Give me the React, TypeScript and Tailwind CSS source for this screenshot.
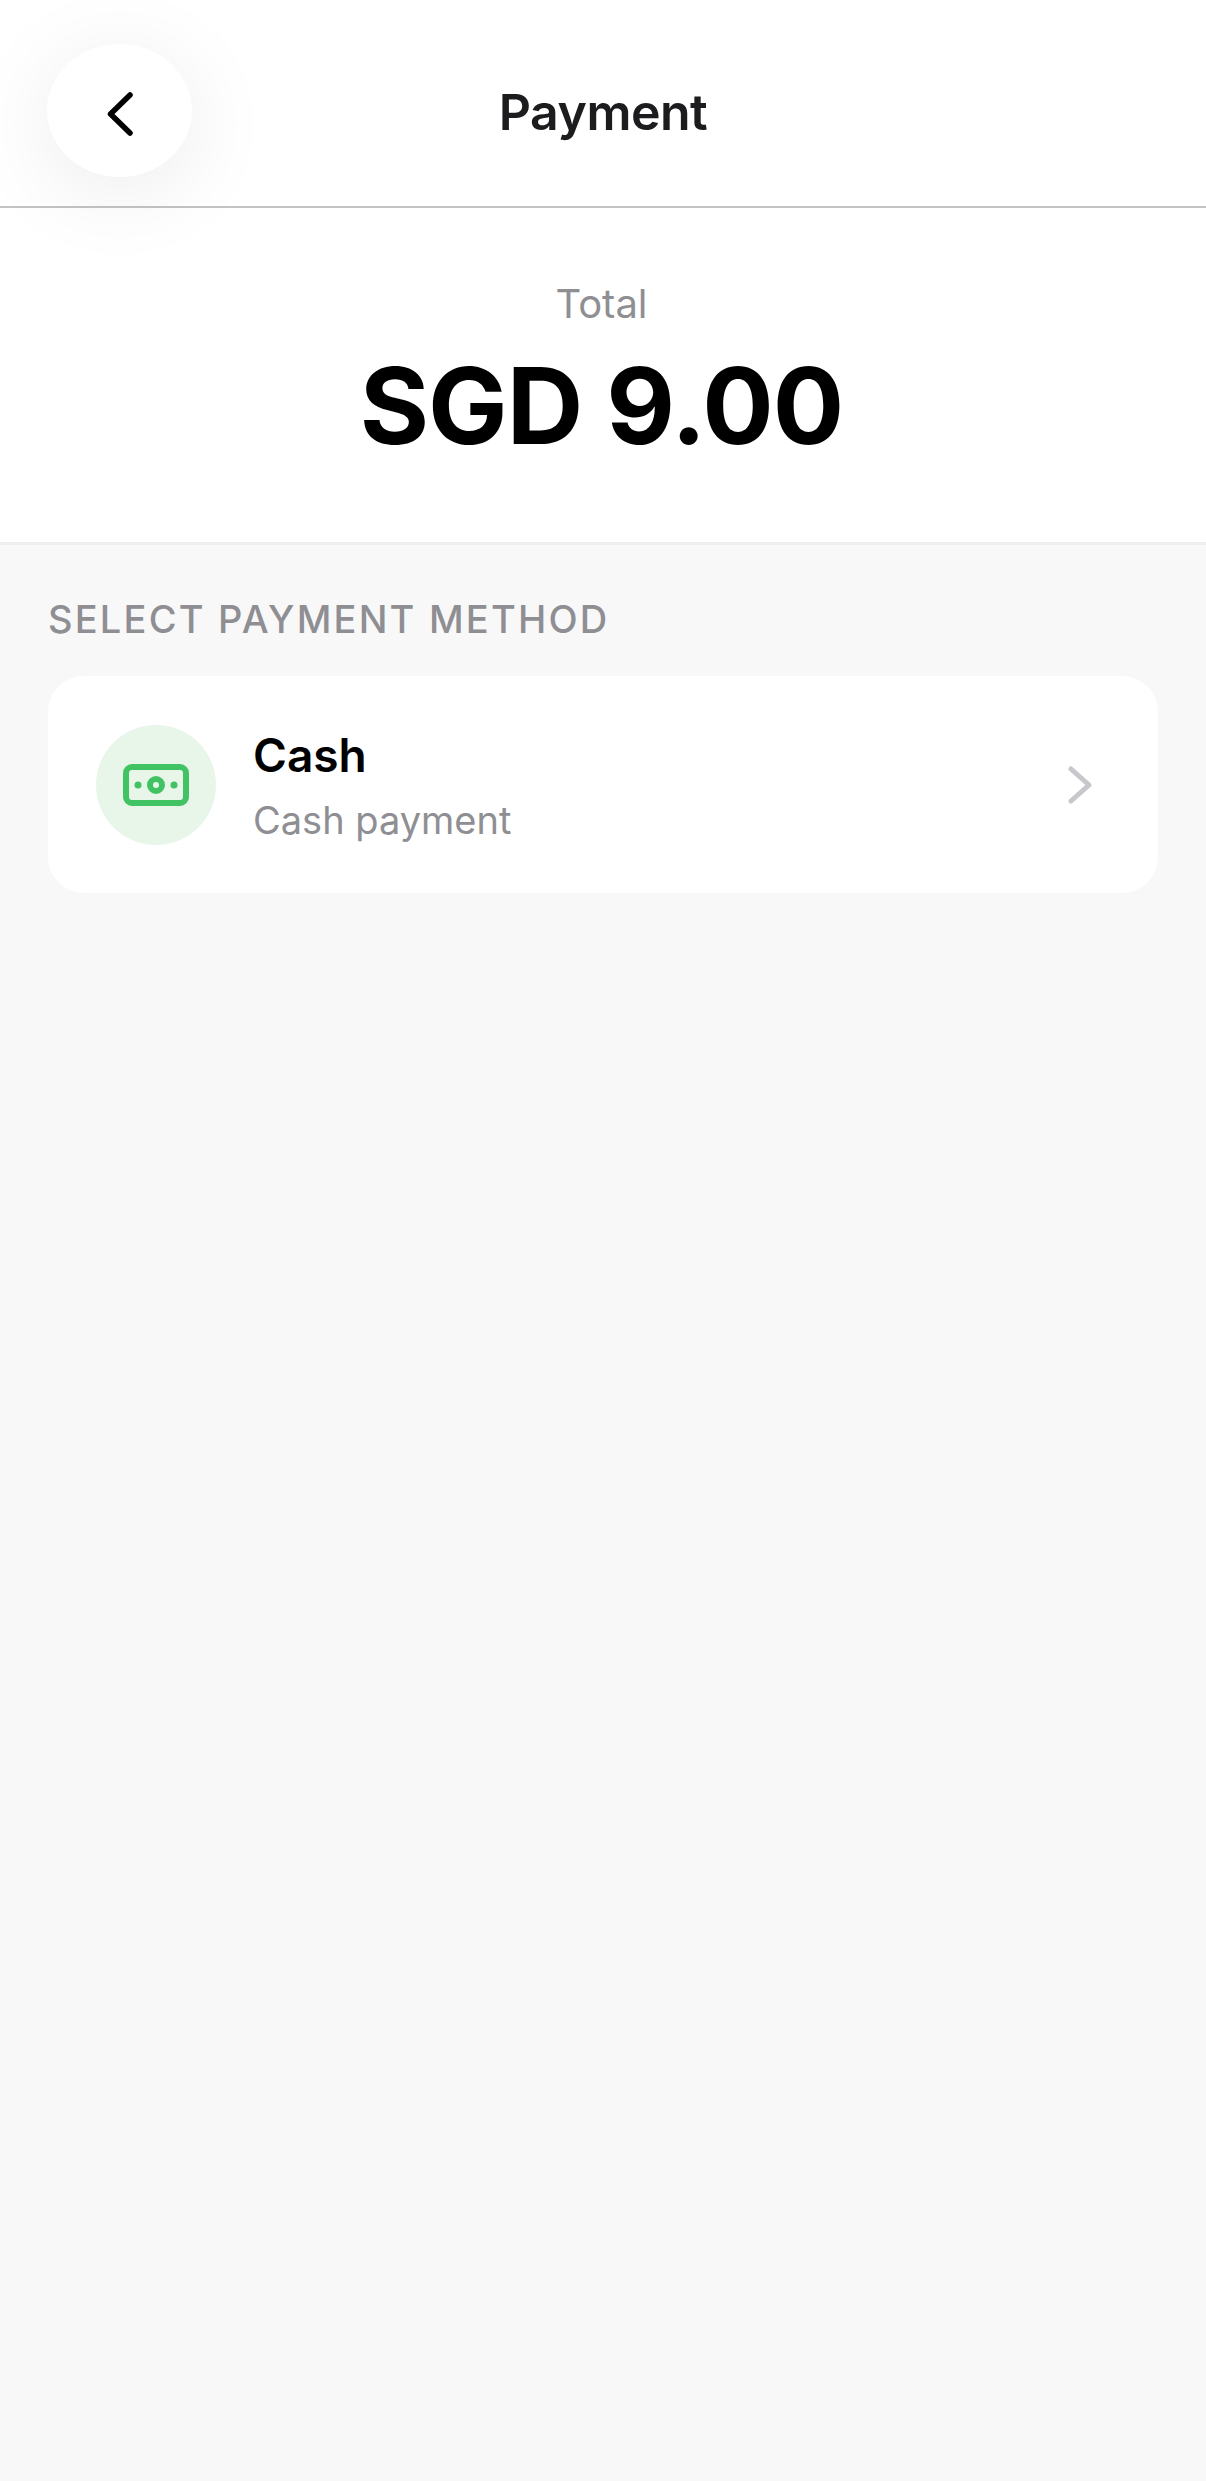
function CashIcon() {
    return (
        <svg width="66" height="42" viewBox="0 0 66 42" fill="none">
            <rect x="3" y="3" width="60" height="36" rx="6" stroke="#41c363" strokeWidth="6" />
            <circle cx="33" cy="21" r="6" stroke="#41c363" strokeWidth="6" />
            <circle cx="15" cy="21" r="3.5" fill="#41c363" />
            <circle cx="51" cy="21" r="3.5" fill="#41c363" />
        </svg>
    );
}

export default function App() {
    return (
        <div className="flex h-[2481px] w-[1206px] flex-col bg-white font-['Inter',sans-serif]">
            {/* Header */}
            <header className="relative z-10 grid h-[208px] shrink-0 grid-cols-[1fr_auto_1fr] items-center border-b-2 border-[#c4c4c6] pl-[47px] pt-[14px]">
                <button className="flex h-[133px] w-[145px] items-center justify-center rounded-[50%] bg-white shadow-[0_14px_90px_rgba(0,0,0,0.08)]">
                    <svg width="26" height="44" viewBox="0 0 26 44" fill="none" className="mt-[8px]">
                        <path d="M23 3 L3.5 22 L23 41" stroke="#000" strokeWidth="5.5" strokeLinecap="round" strokeLinejoin="round" />
                    </svg>
                </button>
                <h1 className="pr-[47px] pt-[4px] text-[50px] font-semibold leading-none tracking-[-0.5px] text-[#1c1c1e]">Payment</h1>
                <div />
            </header>

            {/* Total */}
            <section className="flex h-[337px] shrink-0 flex-col items-center border-b-[3px] border-[#efefef] pr-[3px] pt-[72px]">
                <p className="text-[40px] leading-[48px] text-[#8e8e93]">Total</p>
                <p className="mt-[15px] text-[106px] font-bold leading-[126px] tracking-[-1px] text-black">SGD 9.00</p>
            </section>

            {/* Payment methods */}
            <main className="flex-1 bg-[#f8f8f8] px-[48px] pt-[51px]">
                <h2 className="text-[38px] font-medium leading-[46px] tracking-[2.2px] text-[#8e8e93]">SELECT PAYMENT METHOD</h2>
                <div className="mt-[34px] flex h-[217px] items-center rounded-[36px] bg-white pl-[48px] pr-[66px]">
                    <div className="flex h-[120px] w-[120px] shrink-0 items-center justify-center rounded-full bg-[#e8f5e9]">
                        <CashIcon />
                    </div>
                    <div className="ml-[37px] flex-1">
                        <p className="text-[46px] font-semibold leading-[56px] text-black">Cash</p>
                        <p className="mt-[14px] text-[38px] leading-[46px] text-[#8e8e93]">Cash payment</p>
                    </div>
                    <svg width="24" height="38" viewBox="0 0 24 38" fill="none">
                        <path d="M3 3 L21 19 L3 35" stroke="#c7c7cc" strokeWidth="5" strokeLinecap="round" strokeLinejoin="round" />
                    </svg>
                </div>
            </main>
        </div>
    );
}
